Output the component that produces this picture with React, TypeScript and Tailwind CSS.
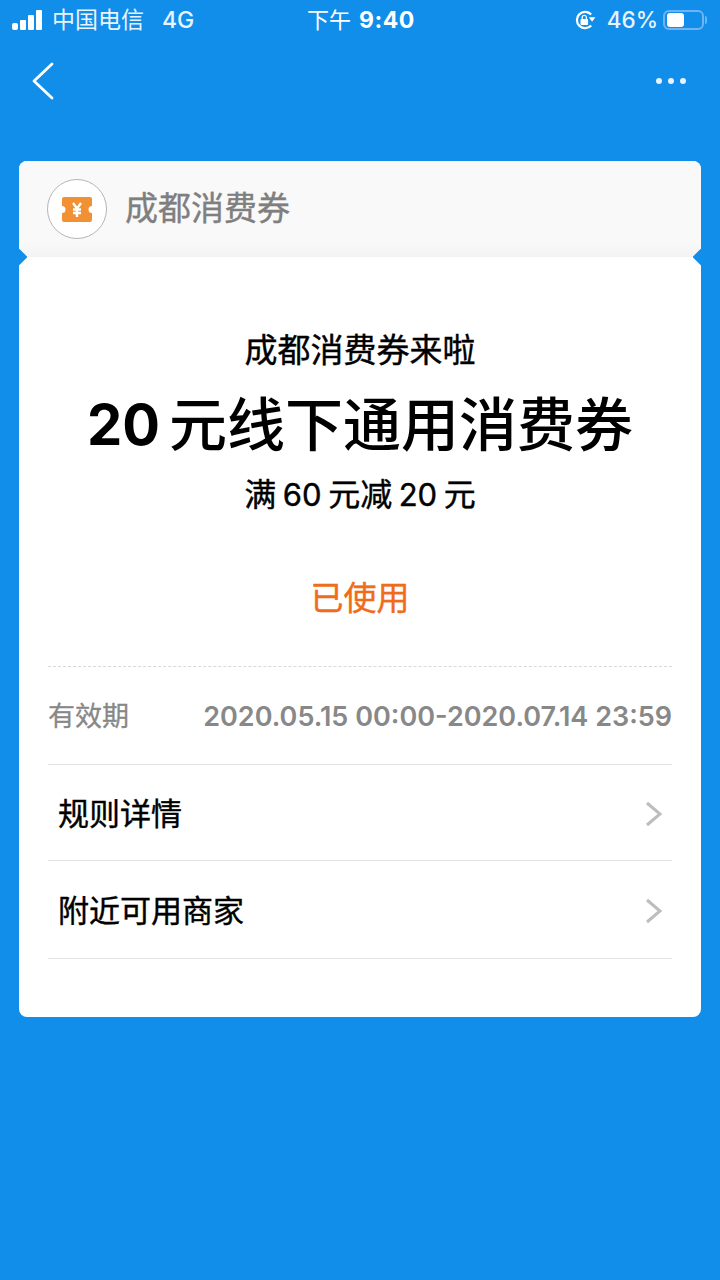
const FONT = "font-['Inter','Noto_Sans_CJK_SC',sans-serif]";

function StatusBar() {
  return (
    <div className="relative flex h-[40px] items-center justify-between pl-[12px] pr-[13px] text-white">
      <div className="flex items-center">
        <div className="flex items-end gap-[2px]">
          <span className="h-[7px] w-[6px] rounded-[2px] bg-white" />
          <span className="h-[10px] w-[6px] rounded-[1px] bg-white" />
          <span className="h-[15px] w-[6px] rounded-[1px] bg-white" />
          <span className="h-[20px] w-[6px] rounded-[1px] bg-white" />
        </div>
        <span className="ml-[10px] text-[23px] leading-[40px] text-[#e8f3fd]">中国电信</span>
        <span className="ml-[18px] text-[23px] font-medium leading-[40px] text-[#e8f3fd]">4G</span>
      </div>
      <div className="absolute left-[307px] top-0 flex items-center text-[22px] leading-[40px]">
        <span>下午</span>
        <span className="ml-[8px] text-[23px] font-bold tracking-[0.5px]">9:40</span>
      </div>
      <div className="flex items-center">
        <svg width="22" height="22" viewBox="0 0 22 22" fill="none" className="mr-[11px]">
          <path d="M17.2 5.500A8.200 8.200 0 1 0 17.200 16.500" stroke="white" strokeWidth="2.200" />
          <path d="M14.800 8.200h6.600l-3.300 4.600z" fill="white" />
          <rect x="6.500" y="10" width="7.600" height="6" rx="1" fill="white" />
          <path d="M8.200 10V8.400a2.100 2.100 0 0 1 4.200 0V10" stroke="white" strokeWidth="1.300" />
        </svg>
        <span className="text-[22.500px] font-medium leading-[40px] text-[#e8f3fd]">46%</span>
        <div className="ml-[5px] flex h-[20px] w-[41px] items-center rounded-[6px] border-2 border-[#6eb4f2] pl-[2px]">
          <div className="h-[14px] w-[17px] rounded-[3px] bg-white" />
        </div>
        <div className="ml-[1px] h-[8px] w-[2px] rounded-r-[2px] bg-[#6eb4f2]" />
      </div>
    </div>
  );
}

function NavBar() {
  return (
    <div className="flex h-[81px] items-center justify-between pl-[32px] pr-[34px]">
      <svg width="22" height="38" viewBox="0 0 22 38" fill="none">
        <path d="M20 2 2 19l18 17" stroke="white" strokeWidth="2.800" strokeLinecap="round" strokeLinejoin="round" />
      </svg>
      <div className="flex gap-[6px]">
        <span className="h-[6px] w-[6px] rounded-full bg-[#e8f3fd]" />
        <span className="h-[6px] w-[6px] rounded-full bg-[#e8f3fd]" />
        <span className="h-[6px] w-[6px] rounded-full bg-[#e8f3fd]" />
      </div>
    </div>
  );
}

function TicketIcon() {
  return (
    <div className="flex h-[60px] w-[60px] items-center justify-center rounded-full border border-[#b5b5b5] bg-white">
      <svg width="30" height="25" viewBox="0 0 30 25">
        <path
          d="M2 0h26a2 2 0 0 1 2 2v7a3.500 3.500 0 0 0 0 7v7a2 2 0 0 1-2 2H2a2 2 0 0 1-2-2v-7a3.500 3.500 0 0 0 0-7V2a2 2 0 0 1 2-2z"
          fill="#f19134"
        />
        <path d="M11 6l4 5.500L19 6M15 11.500V20M11 12.500h8M11 16h8" stroke="white" strokeWidth="2.400" fill="none" />
      </svg>
    </div>
  );
}

function Chevron() {
  return (
    <svg width="18" height="26" viewBox="0 0 18 26" fill="none">
      <path d="M2 2l13 11L2 24" stroke="#bdbdbd" strokeWidth="3" />
    </svg>
  );
}

function Notch({ side }: { side: "left" | "right" }) {
  return (
    <span
      className={
        side === "left"
          ? "absolute -left-[6px] top-[90px] h-[12px] w-[12px] rotate-45 rounded-[1px] bg-[#118eea]"
          : "absolute -right-[6px] top-[90px] h-[12px] w-[12px] rotate-45 rounded-[1px] bg-[#118eea]"
      }
    />
  );
}

function LinkRow({ label, height }: { label: string; height: string }) {
  return (
    <div className={`flex ${height} items-center justify-between border-b border-[#e3e3e3] pl-[10px] pr-[9px] pt-[3px]`}>
      <span className="text-[31px] text-black [-webkit-text-stroke:0.4px_#000]">{label}</span>
      <Chevron />
    </div>
  );
}

export default function App() {
  return (
    <div className={`${FONT} flex h-[1280px] w-[720px] flex-col bg-[#118eea]`}>
      <StatusBar />
      <NavBar />
      <div className="relative mx-[19px] mt-[40px] h-[856px] overflow-hidden rounded-[8px] bg-white">
        <div className="flex h-[96px] items-center gap-[18px] bg-gradient-to-b from-[#f9f9f9] via-[#f9f9f9] via-85% to-[#f3f3f3] pl-[28px]">
          <TicketIcon />
          <span className="text-[33px] text-[#7f7f7f] [-webkit-text-stroke:0.4px_#7f7f7f]">成都消费券</span>
        </div>
        <Notch side="left" />
        <Notch side="right" />
        <div className="px-[29px]">
          <div className="flex flex-col items-center border-b border-dashed border-[#d9d9d9] pb-[46px] pt-[71px]">
            <div className="text-[33px] leading-[44px] text-black [-webkit-text-stroke:0.4px_#000]">成都消费券来啦</div>
            <div className="mt-[17px] flex items-center text-[58px] font-medium leading-[72px] text-black">
              <span className="mr-[9px] text-[56px] font-bold">20</span>
              <span>元线下通用消费券</span>
            </div>
            <div className="mt-[12px] flex items-center text-[32px] leading-[44px] text-black [-webkit-text-stroke:0.4px_#000]">
              <span>满</span>
              <span className="mx-[6.500px] text-[31px]">60</span>
              <span>元减</span>
              <span className="mx-[6.500px] text-[31px]">20</span>
              <span>元</span>
            </div>
            <div className="mt-[59px] text-[33px] leading-[44px] text-[#ef6c1a] [-webkit-text-stroke:0.4px_#ef6c1a]">已使用</div>
          </div>
          <div className="flex h-[98px] items-center justify-between border-b border-[#e3e3e3] pt-[4px] text-[#888888]">
            <span className="text-[27px] [-webkit-text-stroke:0.3px_#888888]">有效期</span>
            <span className="text-[27px] font-semibold">2020.05.15 00:00-2020.07.14 23:59</span>
          </div>
          <LinkRow label="规则详情" height="h-[96px]" />
          <LinkRow label="附近可用商家" height="h-[98px]" />
        </div>
      </div>
    </div>
  );
}
